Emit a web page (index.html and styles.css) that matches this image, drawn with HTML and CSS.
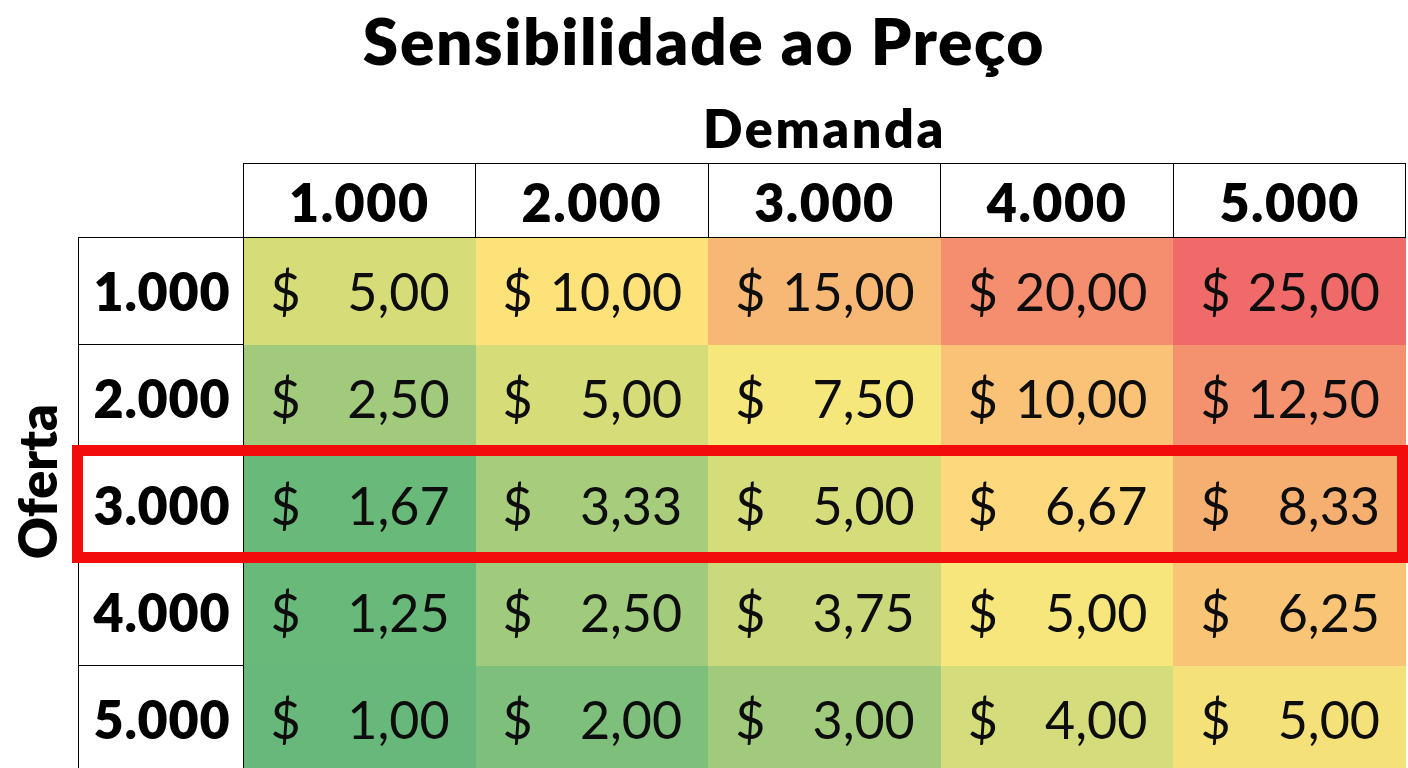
FILE: index.html
```html
<!DOCTYPE html>
<html lang="pt-BR">
<head>
<meta charset="utf-8">
<title>Sensibilidade ao Preço</title>
<link rel="stylesheet" href="styles.css">
</head>
<body>
<div class="sheet">
  <h1 class="title">Sensibilidade ao Preço</h1>
  <div class="axis-row">
    <div class="axis-spacer"></div>
    <div class="axis-label">Demanda</div>
  </div>
  <table class="grid">
    <colgroup>
      <col class="c-axis"><col class="c-head">
      <col class="c-data"><col class="c-data"><col class="c-data"><col class="c-data"><col class="c-data">
    </colgroup>
    <thead>
      <tr class="head-row">
        <td class="blank"></td><td class="blank"></td>
        <th>1.000</th><th>2.000</th><th>3.000</th><th>4.000</th><th>5.000</th>
      </tr>
    </thead>
    <tbody>
      <tr>
        <td class="oferta" rowspan="5"><span class="oferta-label">Oferta</span></td>
        <th class="rowhead">1.000</th>
        <td class="v" style="background:#d5dc78"><span>$</span><span>5,00</span></td>
        <td class="v" style="background:#fde27a"><span>$</span><span>10,00</span></td>
        <td class="v" style="background:#f6b874"><span>$</span><span>15,00</span></td>
        <td class="v" style="background:#f58e6f"><span>$</span><span>20,00</span></td>
        <td class="v" style="background:#ef6a68"><span>$</span><span>25,00</span></td>
      </tr>
      <tr>
        <th class="rowhead">2.000</th>
        <td class="v" style="background:#a2ca7c"><span>$</span><span>2,50</span></td>
        <td class="v" style="background:#d5dc78"><span>$</span><span>5,00</span></td>
        <td class="v" style="background:#f6e77c"><span>$</span><span>7,50</span></td>
        <td class="v" style="background:#fac276"><span>$</span><span>10,00</span></td>
        <td class="v" style="background:#f4916e"><span>$</span><span>12,50</span></td>
      </tr>
      <tr>
        <th class="rowhead">3.000</th>
        <td class="v" style="background:#69b97b"><span>$</span><span>1,67</span></td>
        <td class="v" style="background:#a6cc7c"><span>$</span><span>3,33</span></td>
        <td class="v" style="background:#d5dd7b"><span>$</span><span>5,00</span></td>
        <td class="v" style="background:#fdd87c"><span>$</span><span>6,67</span></td>
        <td class="v" style="background:#f5b071"><span>$</span><span>8,33</span></td>
      </tr>
      <tr>
        <th class="rowhead">4.000</th>
        <td class="v" style="background:#69b97b"><span>$</span><span>1,25</span></td>
        <td class="v" style="background:#a0cb7c"><span>$</span><span>2,50</span></td>
        <td class="v" style="background:#cbd97c"><span>$</span><span>3,75</span></td>
        <td class="v" style="background:#f6e67c"><span>$</span><span>5,00</span></td>
        <td class="v" style="background:#fac476"><span>$</span><span>6,25</span></td>
      </tr>
      <tr>
        <th class="rowhead">5.000</th>
        <td class="v" style="background:#69b87b"><span>$</span><span>1,00</span></td>
        <td class="v" style="background:#7ebf7c"><span>$</span><span>2,00</span></td>
        <td class="v" style="background:#a2ca7c"><span>$</span><span>3,00</span></td>
        <td class="v" style="background:#d5dc7b"><span>$</span><span>4,00</span></td>
        <td class="v" style="background:#f5e17a"><span>$</span><span>5,00</span></td>
      </tr>
    </tbody>
  </table>
  <div class="highlight"></div>
</div>
</body>
</html>
```

FILE: styles.css
```css
html, body {
  margin: 0;
  padding: 0;
  background: #ffffff;
  overflow: hidden;
}

body {
  font-family: Lato, "Open Sans", "Liberation Sans", sans-serif;
  color: #000;
}

.sheet {
  position: relative;
  width: 1408px;
  height: 768px;
}

.title {
  margin: 0;
  font-size: 64px;
  font-weight: 800;
  letter-spacing: 1.6px;
  line-height: 81px;
  height: 81px;
  text-align: center;
}

.axis-row {
  display: flex;
  height: 82px;
}

.axis-spacer {
  width: 243px;
  flex: none;
}

.axis-label {
  width: 1163px;
  padding-top: 12px;
  font-size: 52px;
  font-weight: 800;
  letter-spacing: 2.6px;
  line-height: 70px;
  text-align: center;
}

.grid {
  border-collapse: collapse;
  table-layout: fixed;
  width: 1406px;
}

.c-axis { width: 78px; }
.c-head { width: 165px; }
.c-data { width: 232.6px; }

.grid td, .grid th {
  padding: 0;
}

.head-row {
  height: 74px;
}

.head-row th {
  border: 1.5px solid #000;
  font-size: 52px;
  font-weight: 800;
  letter-spacing: 1.5px;
  text-align: center;
  vertical-align: middle;
  line-height: 1;
  padding-top: 2px;
}

.blank {
  border: none;
}

.grid tbody tr {
  height: 107px;
}

.rowhead {
  border: 1.5px solid #000;
  background: #fff;
  font-size: 52px;
  font-weight: 800;
  letter-spacing: 0.8px;
  text-align: right;
  padding-right: 12px !important;
  vertical-align: middle;
}

.oferta {
  text-align: center;
  vertical-align: middle;
  padding-bottom: 44px !important;
  padding-right: 4px !important;
}

.oferta-label {
  display: inline-block;
  writing-mode: vertical-rl;
  transform: rotate(180deg);
  font-size: 52px;
  font-weight: 800;
  line-height: 1;
}

.v {
  font-size: 52px;
  font-weight: 400;
  color: #0d0d0d;
  vertical-align: middle;
}

.v span:first-child {
  float: left;
  padding-left: 27px;
}

.v span:last-child {
  float: right;
  padding-right: 26px;
}

.highlight {
  position: absolute;
  left: 72px;
  top: 445px;
  width: 1336px;
  height: 118px;
  box-sizing: border-box;
  border: 11px solid #f20c0c;
  pointer-events: none;
}
```
